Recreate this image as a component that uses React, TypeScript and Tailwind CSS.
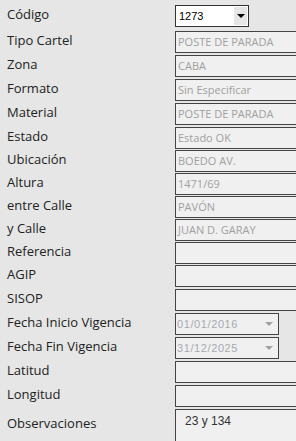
import React from "react";

type Row = {
  label: string;
  value?: string;
  kind?: "input" | "select" | "date" | "textarea";
  h: string;
};

const rows: Row[] = [
  { label: "Código", value: "1273", kind: "select", h: "h-[26px]" },
  { label: "Tipo Cartel", value: "POSTE DE PARADA", h: "h-[24px]" },
  { label: "Zona", value: "CABA", h: "h-[24px]" },
  { label: "Formato", value: "Sin Especificar", h: "h-[24px]" },
  { label: "Material", value: "POSTE DE PARADA", h: "h-[24px]" },
  { label: "Estado", value: "Estado OK", h: "h-[23px]" },
  { label: "Ubicación", value: "BOEDO AV.", h: "h-[23px]" },
  { label: "Altura", value: "1471/69", h: "h-[23px]" },
  { label: "entre Calle", value: "PAVÓN", h: "h-[23px]" },
  { label: "y Calle", value: "JUAN D. GARAY", h: "h-[23px]" },
  { label: "Referencia", h: "h-[23px]" },
  { label: "AGIP", h: "h-[24px]" },
  { label: "SISOP", h: "h-[24px]" },
  { label: "Fecha Inicio Vigencia", value: "01/01/2016", kind: "date", h: "h-[24px]" },
  { label: "Fecha Fin Vigencia", value: "31/12/2025", kind: "date", h: "h-[24px]" },
  { label: "Latitud", h: "h-[24px]" },
  { label: "Longitud", h: "h-[24px]" },
  { label: "Observaciones", value: "23 y 134", kind: "textarea", h: "h-[60px]" },
];

function Field({ row }: { row: Row }) {
  if (row.kind === "select") {
    return (
      <div className="flex h-[22px] w-[74px] shrink-0 items-stretch border border-[#333] bg-white">
        <span className="flex-1 pl-[3px] pt-[3px] text-[11px] leading-[14px] text-black font-['Liberation_Sans',sans-serif]">
          {row.value}
        </span>
        <span className="my-[1px] mr-[1px] flex w-[13px] items-center justify-center bg-[#e6e6e6]">
          <span className="h-0 w-0 border-x-[4px] border-t-[4px] border-x-transparent border-t-black" />
        </span>
      </div>
    );
  }
  if (row.kind === "date") {
    return (
      <div className="flex h-[22px] w-[104px] shrink-0 items-center border border-[#444] bg-[#f0f0f0]">
        <span className="flex-1 pl-[1px] text-[11px] tracking-[0.6px] text-[#a7a9b0] font-['Liberation_Sans',sans-serif]">
          {row.value}
        </span>
        <span className="mr-[5px] h-0 w-0 border-x-[4px] border-t-[4px] border-x-transparent border-t-[#a0a0a0]" />
      </div>
    );
  }
  if (row.kind === "textarea") {
    return (
      <div className="h-[60px] w-[150px] shrink-0 border border-[#444] bg-[#f0f0f0] pl-[9px] pt-[2px] text-[12px] text-[#333] font-['Liberation_Sans',sans-serif]">
        {row.value}
      </div>
    );
  }
  return (
    <div className="flex h-[22px] w-[150px] shrink-0 items-center border border-[#444] bg-[#f0f0f0] pl-[2px] text-[11px] text-[#a0a0a0] font-['Open_Sans',sans-serif]">
      {row.value}
    </div>
  );
}

export default function App() {
  return (
    <div className="h-[441px] w-[296px] overflow-hidden bg-[#e6e6e6] pt-[5px] font-['Open_Sans',sans-serif]">
      {rows.map((r) => (
        <div key={r.label} className={`flex items-start ${r.h}`}>
          <div
            className={`w-[175px] shrink-0 pl-[7px] text-[13px] leading-[18px] text-[#222] ${
              r.kind === "textarea" ? "pt-[5px]" : ""
            }`}
          >
            {r.label}
          </div>
          <Field row={r} />
        </div>
      ))}
    </div>
  );
}
